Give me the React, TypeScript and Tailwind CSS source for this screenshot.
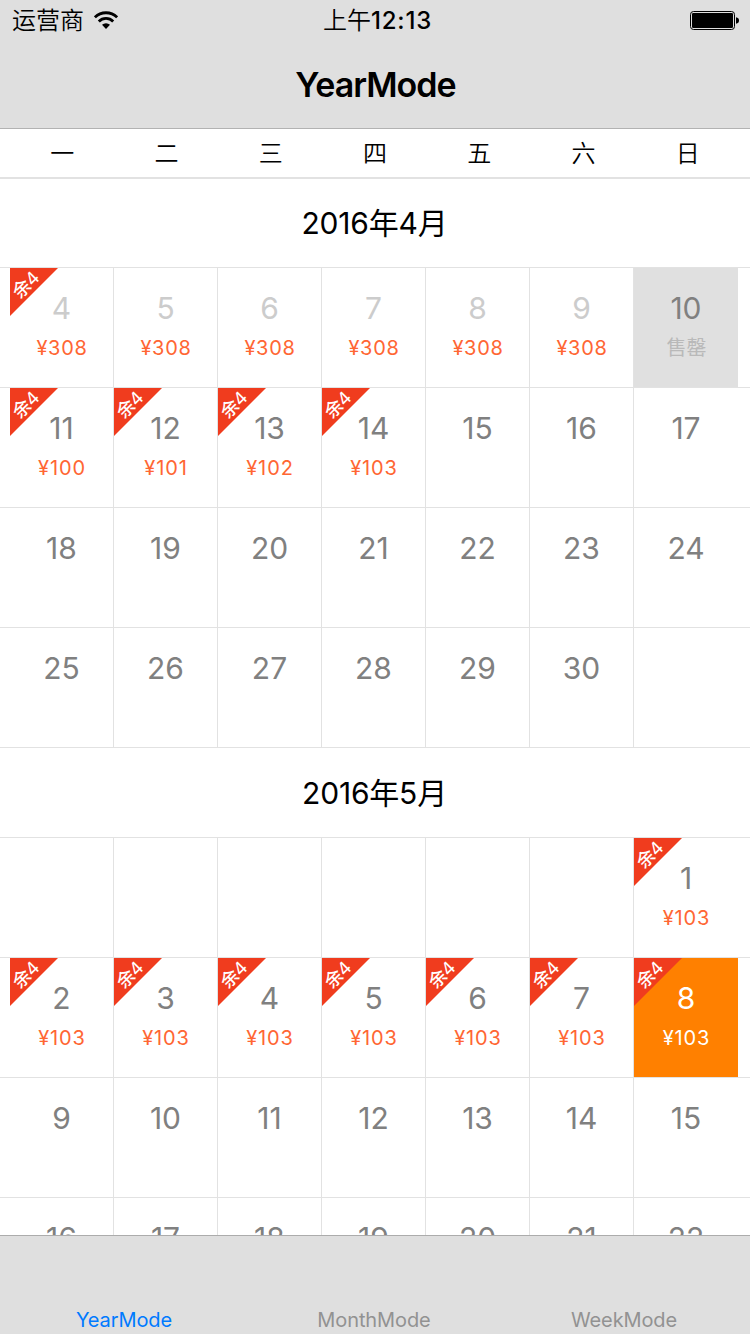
type Tone = "past" | "normal" | "soldOut" | "selected";

interface Day {
  label?: string;
  price?: string;
  left?: boolean;
  tone?: Tone;
}

const plain = (from: number, count: number): Day[] =>
  Array.from({ length: count }, (_, i) => ({ label: String(from + i) }));

const blank = (count: number): Day[] => Array.from({ length: count }, () => ({}));

const april: Day[][] = [
  [
    { label: "4", price: "¥308", left: true, tone: "past" },
    { label: "5", price: "¥308", tone: "past" },
    { label: "6", price: "¥308", tone: "past" },
    { label: "7", price: "¥308", tone: "past" },
    { label: "8", price: "¥308", tone: "past" },
    { label: "9", price: "¥308", tone: "past" },
    { label: "10", price: "售罄", tone: "soldOut" },
  ],
  [
    { label: "11", price: "¥100", left: true },
    { label: "12", price: "¥101", left: true },
    { label: "13", price: "¥102", left: true },
    { label: "14", price: "¥103", left: true },
    ...plain(15, 3),
  ],
  plain(18, 7),
  [...plain(25, 6), ...blank(1)],
];

const may: Day[][] = [
  [...blank(6), { label: "1", price: "¥103", left: true }],
  plain(2, 7).map((d): Day => ({
    ...d,
    price: "¥103",
    left: true,
    tone: d.label === "8" ? "selected" : "normal",
  })),
  plain(9, 7),
  plain(16, 7),
];

const labelColor: Record<Tone, string> = {
  past: "text-[#cccccc]",
  normal: "text-[#808080]",
  soldOut: "text-[#808080]",
  selected: "text-white",
};

const priceColor: Record<Tone, string> = {
  past: "text-[#ff6633] tracking-[0.7px]",
  normal: "text-[#ff6633] tracking-[0.9px]",
  soldOut: "text-[#b9b9b9]",
  selected: "text-white tracking-[0.9px]",
};

const cellColor: Record<Tone, string> = {
  past: "",
  normal: "",
  soldOut: "bg-[#e0e0e0]",
  selected: "bg-[#ff8000]",
};

function Ribbon() {
  return (
    <div className="absolute left-0 top-0 size-12">
      <svg viewBox="0 0 48 48" className="absolute inset-0 size-12">
        <path d="M0 0H48L0 48Z" fill="#f03c1e" />
      </svg>
      <span className="absolute left-[-4px] top-[7px] flex h-5 w-10 -rotate-45 items-center justify-center whitespace-nowrap text-[18px] leading-5 tracking-[-0.3px] text-white">
        <span className="font-medium">余</span>4
      </span>
    </div>
  );
}

function DayCell({ day, last }: { day: Day; last: boolean }) {
  const tone = day.tone ?? "normal";
  return (
    <div
      className={`relative flex h-[119px] w-[104px] flex-col items-center pt-[22px] ${
        last ? "" : "border-r border-[#e2e2e2]"
      } ${cellColor[tone]}`}
    >
      {day.left && <Ribbon />}
      <span className={`relative h-9 text-[30px] leading-9 ${labelColor[tone]}`}>{day.label}</span>
      <span
        className={`relative mt-[10px] h-6 whitespace-nowrap pl-px text-[20px] leading-6 ${priceColor[tone]}`}
      >
        {day.price}
      </span>
    </div>
  );
}

function Month({ title, weeks }: { title: string; weeks: Day[][] }) {
  return (
    <section>
      <h2 className="flex h-[90px] items-center justify-center border-b border-[#e2e2e2] pr-px text-[30px] font-[370] leading-9 tracking-[-0.2px]">
        {title}
      </h2>
      {weeks.map((week, w) => (
        <div key={w} className="flex h-[120px] border-b border-[#e2e2e2] pl-[10px]">
          {week.map((day, d) => (
            <DayCell key={d} day={day} last={d === 6} />
          ))}
        </div>
      ))}
    </section>
  );
}

function WifiIcon() {
  return (
    <svg viewBox="0 0 24 19" className="h-[19px] w-6">
      <g fill="none" stroke="#000" strokeWidth="2.8">
        <path d="M0.9 6.3A15.8 15.8 0 0 1 23.1 6.3" />
        <path d="M4.8 10.4A10.2 10.2 0 0 1 19.2 10.4" />
      </g>
      <path d="M8 13.7A6 6 0 0 1 16 13.7L12 18Z" fill="#000" />
    </svg>
  );
}

function BatteryIcon() {
  return (
    <svg viewBox="0 0 50 20" className="h-5 w-[50px]">
      <rect x="0.5" y="0.5" width="44" height="18" rx="3" fill="none" stroke="#000" />
      <rect x="2" y="2" width="41" height="15" rx="1.2" fill="#000" />
      <path d="M46 6.2Q49 6.8 49 9.5Q49 12.2 46 12.8Z" fill="#000" />
    </svg>
  );
}

const tabs = ["YearMode", "MonthMode", "WeekMode"];

export default function App() {
  return (
    <div className="flex h-[1334px] w-[750px] flex-col overflow-hidden bg-white font-['Inter','Noto_Sans_CJK_SC',sans-serif] text-black">
      <header className="h-[129px] shrink-0 border-b border-[#b2b2b2] bg-[#dfdfdf]">
        <div className="grid h-10 grid-cols-3 items-center">
          <div className="flex items-center gap-[10px] pl-3 text-[24px] leading-9">
            <span className="pt-[2px] font-[350]">运营商</span>
            <WifiIcon />
          </div>
          <div className="pl-[5px] pt-[2px] text-center text-[24px] font-medium leading-9 tracking-[0.8px]">
            <span className="font-[350] tracking-normal">上午</span>12:13
          </div>
          <div className="flex justify-end pr-[10px] pt-px">
            <BatteryIcon />
          </div>
        </div>
        <h1 className="flex h-[88px] items-center justify-center pl-px text-[34px] font-semibold tracking-[-1px]">
          YearMode
        </h1>
      </header>
      <div className="flex h-[50px] shrink-0 items-center justify-around border-b-2 border-[#e2e2e2] px-[10px] pt-[2px] text-[24px] font-[350]">
        {["一", "二", "三", "四", "五", "六", "日"].map((d) => (
          <span key={d} className="w-[104px] text-center">
            {d}
          </span>
        ))}
      </div>
      <main className="-mt-px min-h-0 flex-1 overflow-hidden">
        <Month title="2016年4月" weeks={april} />
        <Month title="2016年5月" weeks={may} />
      </main>
      <nav className="grid h-[99px] shrink-0 grid-cols-3 items-end border-t border-[#acacac] bg-[#dfdfdf] pb-[2px] text-[20px] leading-6 tracking-[-0.1px] text-[#929292]">
        {tabs.map((t, i) => (
          <span key={t} className={`pr-[2px] text-center ${i === 0 ? "text-[#007aff]" : ""}`}>
            {t}
          </span>
        ))}
      </nav>
    </div>
  );
}
